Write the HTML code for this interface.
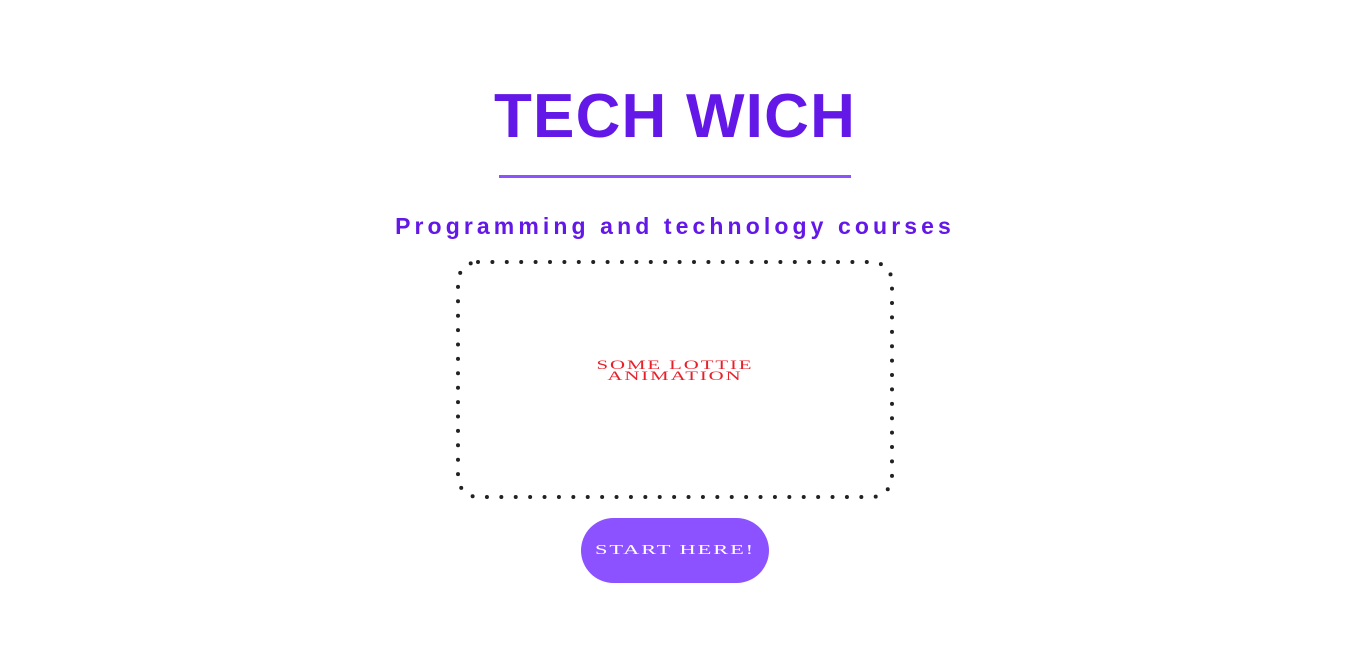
<!DOCTYPE html>
<html><head><style>
html,body{margin:0;padding:0;background:#fff;width:1350px;height:650px;overflow:hidden;position:relative}
.t{position:absolute;left:0;width:1350px;text-align:center;font-family:"Liberation Sans",sans-serif;font-weight:bold;color:#6318e8}
.title{top:81px;font-size:62px;line-height:72px;letter-spacing:1.2px}
.line{position:absolute;left:499px;top:175px;width:352px;height:3px;background:#8c52ff}
.sub{top:211px;font-size:23px;line-height:30px;letter-spacing:4.1px}
svg{position:absolute;left:0;top:0}
.anim{position:absolute;left:525px;top:359px;width:300px;text-align:center;font-family:"Liberation Serif",serif;color:#e8202a;font-size:13px;line-height:11px;letter-spacing:1.2px;transform:scaleX(1.6)}
.btn{position:absolute;left:581px;top:518px;width:188px;height:65px;border-radius:33px;background:#8c52ff;color:#fff;font-family:"Liberation Serif",serif;font-size:14px;line-height:65px;text-align:center;letter-spacing:1.2px}
.btn span{display:inline-block;transform:scaleX(1.6)}
</style></head><body>
<div class="t title">TECH WICH</div>
<div class="line"></div>
<div class="t sub">Programming and technology courses</div>
<svg width="1350" height="650"><rect x="458" y="262" width="434" height="235" rx="20" fill="none" stroke="#222" stroke-width="4" stroke-linecap="round" stroke-dasharray="0 14.4"/></svg>
<div class="anim">SOME LOTTIE<br>ANIMATION</div>
<div class="btn"><span>START HERE!</span></div>
</body></html>
